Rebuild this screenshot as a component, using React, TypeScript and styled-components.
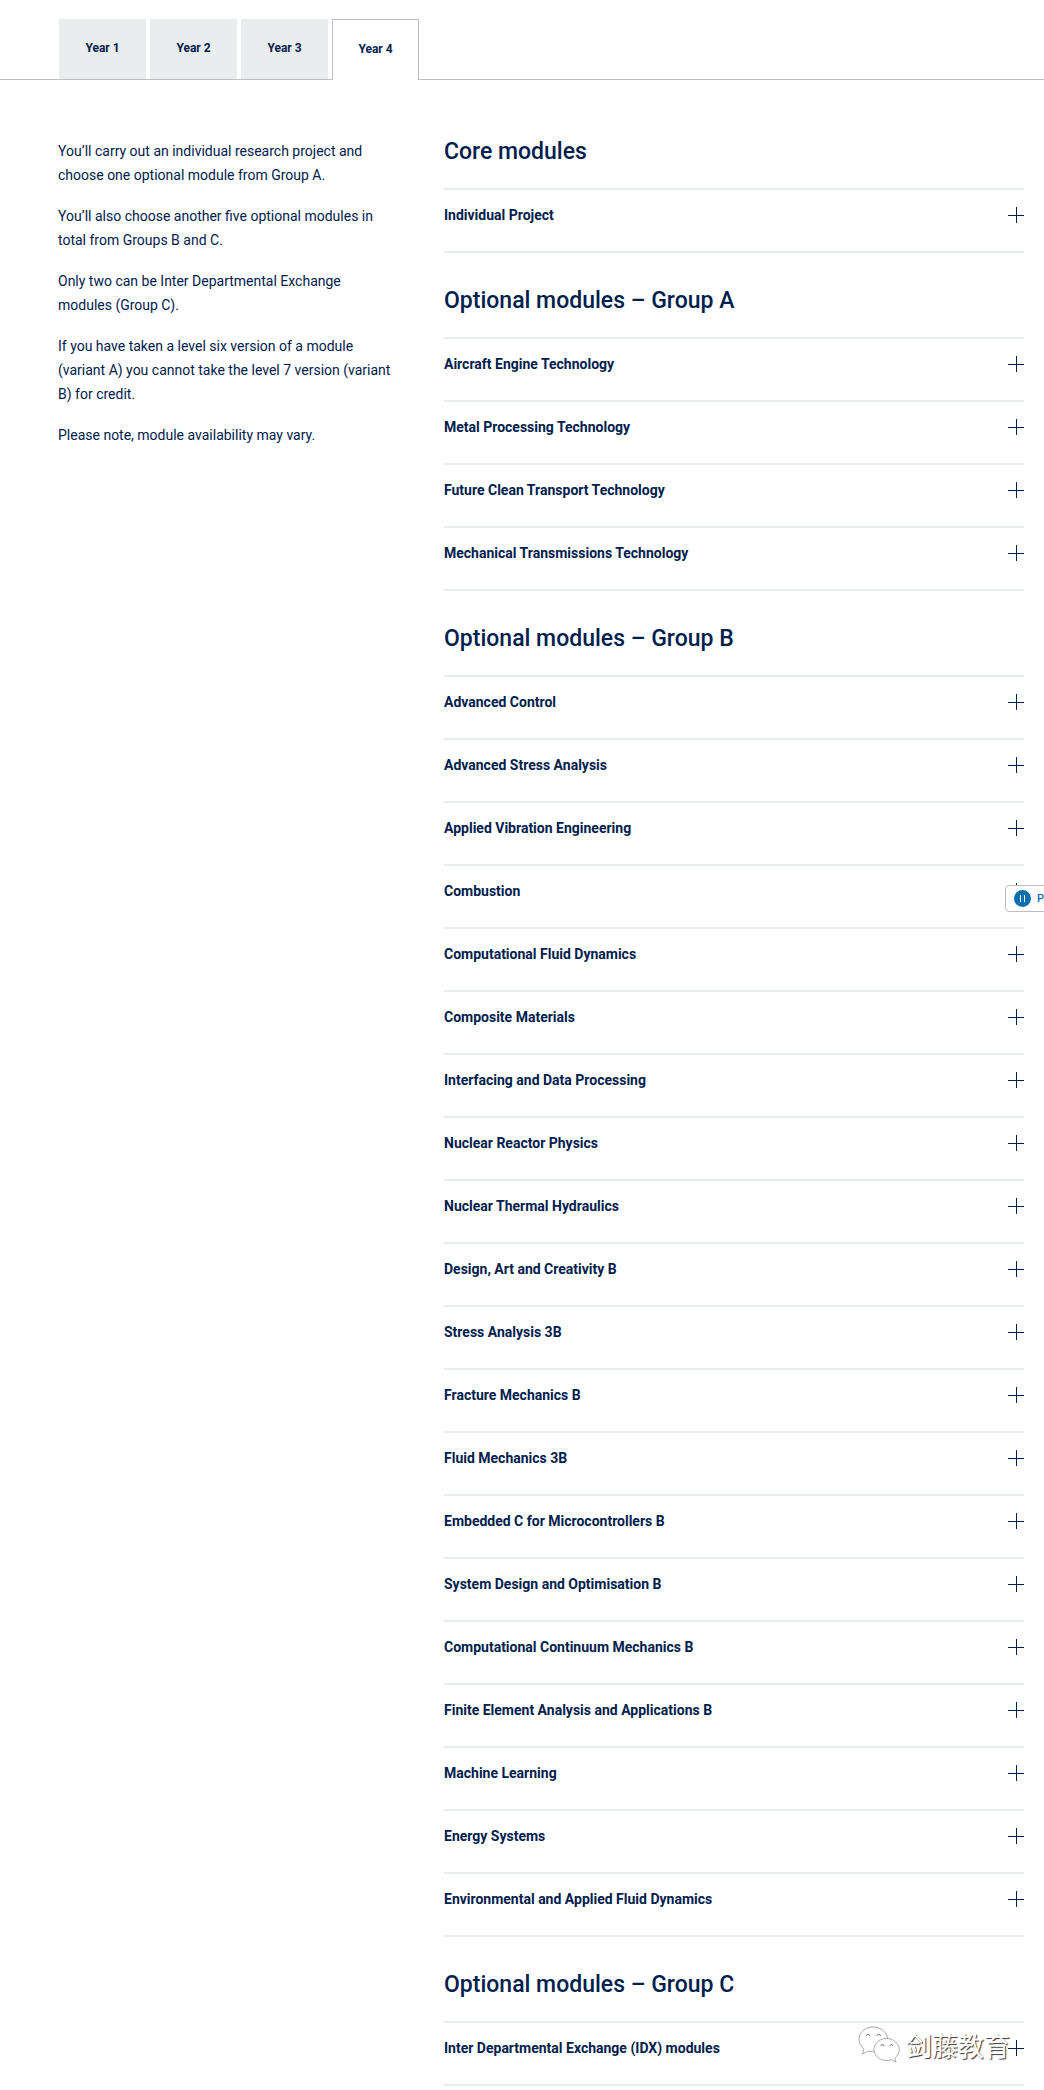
import React, { useState } from "react";
import styled, { createGlobalStyle } from "styled-components";

const navy = "#00204d";
const rule = "#e9eded";
const line = "#bcbec2";

const GlobalStyle = createGlobalStyle`
  *, *::before, *::after { box-sizing: border-box; }
  body {
    margin: 0;
    background: #fff;
    color: ${navy};
    font-family: Roboto, "Noto Sans", "Noto Sans CJK SC", sans-serif;
    font-size: 14px;
    line-height: 24px;
    overflow-x: hidden;
  }
  button { font: inherit; color: inherit; cursor: pointer; }
`;

const Page = styled.div`
  position: relative;
  overflow: hidden;
`;

const TabList = styled.div`
  display: flex;
  gap: 4px;
  padding: 19px 20px 0 59px;
  border-bottom: 1px solid ${line};
`;

const Tab = styled.button<{ $active: boolean }>`
  width: 87px;
  height: ${(p) => (p.$active ? "61px" : "60px")};
  margin-bottom: ${(p) => (p.$active ? "-1px" : "0")};
  padding: 0 0 2px;
  border: ${(p) => (p.$active ? `1px solid ${line}` : "0")};
  border-bottom: 0;
  background: ${(p) => (p.$active ? "#fff" : rule)};
  font-size: 12px;
  font-weight: 700;
`;

const Content = styled.main`
  display: grid;
  grid-template-columns: minmax(0, 336fr) minmax(0, 580fr);
  gap: 50px;
  padding: 59px 20px 3px 58px;
`;

const Intro = styled.div`
  display: flex;
  flex-direction: column;
  gap: 17px;
`;

const Paragraph = styled.p`
  margin: 0;
`;

const Groups = styled.div`
  display: flex;
  flex-direction: column;
  gap: 35px;
`;

const Heading = styled.h2`
  margin: 0;
  padding-bottom: 23px;
  font-size: 23px;
  line-height: 26px;
  font-weight: 500;
`;

const ModuleList = styled.ul`
  margin: 0;
  padding: 0;
  list-style: none;
  border-top: 2px solid ${rule};
`;

const ModuleItem = styled.li`
  border-bottom: 2px solid ${rule};
`;

const ModuleTitle = styled.h3`
  margin: 0;
  font-size: 14px;
  font-weight: 700;
`;

const ModuleButton = styled.button`
  display: flex;
  width: 100%;
  justify-content: space-between;
  align-items: center;
  padding: 13px 0 24px;
  border: 0;
  background: none;
  text-align: left;
`;

const PlusIcon = styled.span`
  width: 16px;
  height: 16px;
  background:
    linear-gradient(${navy}, ${navy}) 8px 0 / 1px 16px no-repeat,
    linear-gradient(${navy}, ${navy}) 0 8px / 16px 1px no-repeat;
`;

const Detail = styled.p`
  margin: 0;
  padding-bottom: 24px;
`;

const PlayerBadge = styled.button`
  position: absolute;
  top: 885px;
  right: -6px;
  display: flex;
  align-items: center;
  gap: 6px;
  width: 45px;
  height: 27px;
  padding: 0 0 0 8px;
  border: 1px solid ${line};
  border-radius: 4px;
  background: #fff;
  color: #0b6fae;
  font-size: 11px;
  line-height: 24px;
  font-weight: 500;
`;

const Watermark = styled.div`
  position: absolute;
  right: 34px;
  bottom: 24px;
  display: flex;
  align-items: center;
  gap: 6px;
  color: #fff;
  font-family: "Noto Sans CJK SC", sans-serif;
  font-size: 26px;
  line-height: 40px;
  text-shadow: 1px 1px 1px #333;
  pointer-events: none;
`;

const tabs = ["Year 1", "Year 2", "Year 3", "Year 4"];

const paragraphs = [
  "You’ll carry out an individual research project and choose one optional module from Group A.",
  "You’ll also choose another five optional modules in total from Groups B and C.",
  "Only two can be Inter Departmental Exchange modules (Group C).",
  "If you have taken a level six version of a module (variant A) you cannot take the level 7 version (variant B) for credit.",
  "Please note, module availability may vary.",
];

const groups = [
  { title: "Core modules", modules: ["Individual Project"] },
  {
    title: "Optional modules – Group A",
    modules: [
      "Aircraft Engine Technology",
      "Metal Processing Technology",
      "Future Clean Transport Technology",
      "Mechanical Transmissions Technology",
    ],
  },
  {
    title: "Optional modules – Group B",
    modules: [
      "Advanced Control",
      "Advanced Stress Analysis",
      "Applied Vibration Engineering",
      "Combustion",
      "Computational Fluid Dynamics",
      "Composite Materials",
      "Interfacing and Data Processing",
      "Nuclear Reactor Physics",
      "Nuclear Thermal Hydraulics",
      "Design, Art and Creativity B",
      "Stress Analysis 3B",
      "Fracture Mechanics B",
      "Fluid Mechanics 3B",
      "Embedded C for Microcontrollers B",
      "System Design and Optimisation B",
      "Computational Continuum Mechanics B",
      "Finite Element Analysis and Applications B",
      "Machine Learning",
      "Energy Systems",
      "Environmental and Applied Fluid Dynamics",
    ],
  },
  {
    title: "Optional modules – Group C",
    modules: ["Inter Departmental Exchange (IDX) modules"],
  },
];

function Module({ name }: { name: string }) {
  const [open, setOpen] = useState(false);
  return (
    <ModuleItem>
      <ModuleTitle>
        <ModuleButton type="button" aria-expanded={open} onClick={() => setOpen(!open)}>
          {name}
          <PlusIcon aria-hidden="true" />
        </ModuleButton>
      </ModuleTitle>
      {open && <Detail>{name}</Detail>}
    </ModuleItem>
  );
}

function PauseIcon() {
  return (
    <svg width="17" height="17" viewBox="0 0 17 17" aria-hidden="true">
      <circle cx="8.5" cy="8.5" r="8.5" fill="#0b6fae" />
      <path d="M6.5 5v7M10.5 5v7" stroke="#fff" strokeWidth="1" />
    </svg>
  );
}

function ChatIcon() {
  return (
    <svg width="42" height="38" viewBox="0 0 42 38" fill="#fff" stroke="#888" strokeWidth="0.7" aria-hidden="true">
      <path d="M15 1C7 1 1 6.500 1 13.500c0 4 2 7.300 5 9.500l-1.500 5 5.500-3c2 .7 4 .9 6 .7 8-.6 13.500-6 13.500-12.400C29.500 6.500 23 1 15 1z" />
      <path d="M28.500 12.500c-7 0-12.500 5-12.500 11s5.500 11 12.500 11c1.700 0 3.300-.3 4.700-.8l4.800 2.500-1.200-4.200c2.700-2 4.400-5 4.400-8.500 0-6-5.700-11-12.700-11z" />
      <path d="M8.500 10a1.700 1.700 0 0 1 3.400 0M19 10a1.700 1.700 0 0 1 3.400 0M23 20a1.500 1.500 0 0 1 3 0M32 20a1.500 1.500 0 0 1 3 0" fill="none" stroke="#444" />
    </svg>
  );
}

export default function App() {
  const [active, setActive] = useState(3);
  return (
    <Page>
      <GlobalStyle />
      <TabList role="tablist" aria-label="Year of study">
        {tabs.map((tab, i) => (
          <Tab
            key={tab}
            type="button"
            role="tab"
            aria-selected={i === active}
            $active={i === active}
            onClick={() => setActive(i)}
          >
            {tab}
          </Tab>
        ))}
      </TabList>
      <Content>
        <Intro>
          {paragraphs.map((text) => (
            <Paragraph key={text}>{text}</Paragraph>
          ))}
        </Intro>
        <Groups>
          {groups.map((group) => (
            <section key={group.title}>
              <Heading>{group.title}</Heading>
              <ModuleList>
                {group.modules.map((name) => (
                  <Module key={name} name={name} />
                ))}
              </ModuleList>
            </section>
          ))}
        </Groups>
      </Content>
      <PlayerBadge type="button">
        <PauseIcon />P
      </PlayerBadge>
      <Watermark>
        <ChatIcon />
        剑藤教育
      </Watermark>
    </Page>
  );
}
